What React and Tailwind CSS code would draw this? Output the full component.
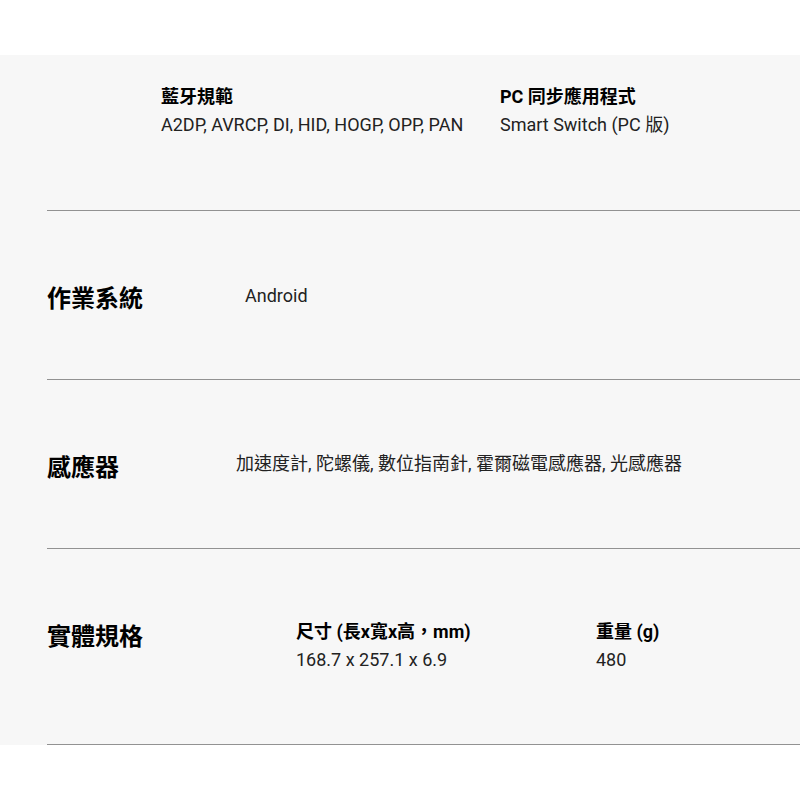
import React from 'react';

const font = { fontFamily: 'Roboto, "Noto Sans CJK TC", sans-serif' };

function SpecItem({ title, value }) {
  return (
    <div>
      <div className="text-[18px] font-bold leading-[28px] text-black">{title}</div>
      <div className="text-[18px] leading-[28px] text-[#222]">{value}</div>
    </div>
  );
}

function Row({ label, children, valueClass }) {
  return (
    <div className="flex border-t border-[#929292] pt-[73px]">
      <div className="w-[190px] shrink-0 text-[24px] font-bold leading-[30px] text-black">{label}</div>
      <div className={valueClass}>{children}</div>
    </div>
  );
}

export default function App() {
  return (
    <div className="min-h-[800px] bg-white" style={font}>
      <div className="h-[55px] bg-white" />
      <div className="bg-[#f7f7f7] pl-[47px]">
        <div className="flex pl-[114px] pt-[28px] pb-[71px]">
          <div className="w-[339px]">
            <SpecItem title="藍牙規範" value="A2DP, AVRCP, DI, HID, HOGP, OPP, PAN" />
          </div>
          <SpecItem title="PC 同步應用程式" value="Smart Switch (PC 版)" />
        </div>

        <Row label="作業系統" valueClass="pl-[8px] -mt-[2px] pb-[69px] text-[18px] leading-[28px] text-[#222]">
          Android
        </Row>

        <Row label="感應器" valueClass="-mt-[3px] pb-[70px] text-[18px] leading-[28px] text-[#222] -ml-[1px]">
          加速度計, 陀螺儀, 數位指南針, 霍爾磁電感應器, 光感應器
        </Row>

        <Row label="實體規格" valueClass="flex pl-[59px] pb-[70px]">
          <div className="w-[300px] -mt-[4px]">
            <SpecItem title="尺寸 (長x寬x高，mm)" value="168.7 x 257.1 x 6.9" />
          </div>
          <div className="-mt-[4px]">
            <SpecItem title="重量 (g)" value="480" />
          </div>
        </Row>

        <div className="border-t border-[#929292]" />
      </div>
    </div>
  );
}
